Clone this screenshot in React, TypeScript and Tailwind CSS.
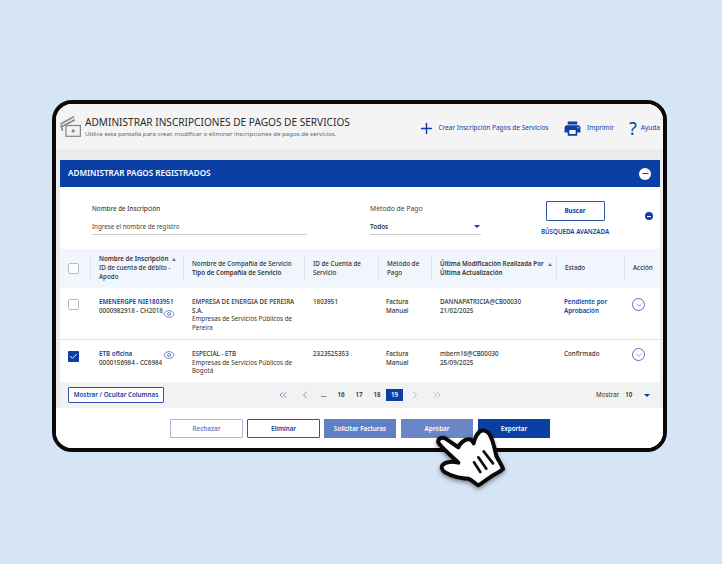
import { ChevronDown, ChevronLeft, ChevronRight, ChevronsLeft, ChevronsRight, Eye, Minus, Plus, Check } from "lucide-react";
import { MdPrint } from "react-icons/md";

const font = "[font-family:'Noto_Sans',sans-serif]";

function CashIcon() {
  return (
    <svg viewBox="0 0 21 21" className="h-[21px] w-[21px] shrink-0" fill="none" stroke="#8a8a8a" strokeWidth="1.3">
      <path d="M0.5 8 L14 0.8 M1 11 L15 3.8 M2.5 14.5 L1 9" strokeWidth="1.8" />
      <rect x="6" y="9.5" width="14.4" height="10.8" fill="#f4f4f4" />
      <circle cx="13.2" cy="14.9" r="1.7" fill="#8a8a8a" stroke="none" />
    </svg>
  );
}

function SortUp() {
  return <span className="ml-[4px] inline-block h-0 w-0 border-x-[2.5px] border-b-[3px] border-x-transparent border-b-[#777] align-middle" />;
}

function Caret() {
  return <span className="block h-0 w-0 border-x-[3.5px] border-t-[3.5px] border-x-transparent border-t-[#0b3fa4]" />;
}

function HeadCell({ children, divider = true }: { children: React.ReactNode; divider?: boolean }) {
  return (
    <div className="flex h-full items-center">
      {divider && <div className="h-[25px] w-px shrink-0 bg-[#dfe5ec]" />}
      <div className="whitespace-nowrap pl-[8px] text-[6.25px] font-medium leading-[8.7px] text-[#333]">{children}</div>
    </div>
  );
}

function CheckBox({ checked }: { checked?: boolean }) {
  if (checked) {
    return (
      <div className="flex h-[11px] w-[11px] items-center justify-center rounded-[1px] bg-[#0b3fa4]">
        <Check className="h-[9px] w-[9px] text-white" strokeWidth={2.5} />
      </div>
    );
  }
  return <div className="h-[11px] w-[11px] rounded-[2px] border border-[#bbb] bg-white" />;
}

function ActionCircle() {
  return (
    <div className="flex h-[13px] w-[13px] items-center justify-center rounded-full border border-[#5a6fb5]">
      <ChevronDown className="h-[10px] w-[10px] text-[#5a6fb5]" strokeWidth={1.5} />
    </div>
  );
}

function Row({ check, name, account, eyeUp, company, type, id, estado, pending, mod, date, h }: {
  check?: boolean; name: string; account: string; eyeUp?: boolean; company: React.ReactNode; type: React.ReactNode;
  id: string; estado: React.ReactNode; pending?: boolean; mod: string; date: string; h: string;
}) {
  return (
    <div className={`grid grid-cols-[30px_93px_121px_74px_53px_125px_68px_36px] pt-[10px] text-[6.25px] font-medium leading-[8.7px] text-[#333] ${h}`}>
      <div className="pl-[8px] pt-[1px]"><CheckBox checked={check} /></div>
      <div className="pl-[9px]">
        <div className="font-semibold text-[#0b3fa4]">{name}</div>
        <div className="relative whitespace-nowrap">
          {account}
          <Eye className={`absolute left-[64px] h-[12px] w-[12px] text-[#3c5cae] ${eyeUp ? "top-[-10px]" : "top-[1px]"}`} strokeWidth={1.4} />
        </div>
      </div>
      <div className="pl-[9px] pr-[6px]">
        <div>{company}</div>
        <div className="font-normal">{type}</div>
      </div>
      <div className="pl-[9px]">{id}</div>
      <div className="pl-[8px]">Factura<br />Manual</div>
      <div className="pl-[9px]"><div>{mod}</div><div>{date}</div></div>
      <div className={`pl-[8px] ${pending ? "font-semibold text-[#0b3fa4]" : ""}`}>{estado}</div>
      <div className={`pl-[8px] ${check ? "-mt-[2px]" : ""}`}><ActionCircle /></div>
    </div>
  );
}

function Hand() {
  return (
    <svg viewBox="0 0 270 225" className="absolute left-[425px] top-[420px] h-[75px] w-[90px] drop-shadow-[0_2px_2px_rgba(0,0,0,0.45)]">
      <path
        d="M40 68 C38 54 52 50 62 56 L100 82 C104 70 118 60 128 58 C136 56 142 60 146 70 C148 56 158 36 170 32 C182 28 194 40 198 52 C205 66 210 90 214 108 C222 124 232 138 234 147 C222 158 206 164 198 170 C186 176 172 190 160 196 C150 190 140 180 130 176 C112 176 80 170 62 158 C48 150 48 140 54 134 C62 124 84 124 100 128 C80 108 54 88 40 68 Z"
        fill="#fff"
        stroke="#0a0a0a"
        strokeWidth="12"
        strokeLinejoin="round"
      />
      <path d="M147 127 L166 156 M160 112 L184 146 M176 94 L204 130" stroke="#0a0a0a" strokeWidth="8" strokeLinecap="round" fill="none" />
    </svg>
  );
}

export default function App() {
  return (
    <div className={`relative h-[564px] w-[722px] overflow-hidden bg-[#d5e5f6] pl-[52px] pt-[100px] ${font}`}>
      <div className="flex h-[352px] w-[615px] flex-col overflow-hidden rounded-[20px] border-[4px] border-[#0a0a0a] bg-white">
        {/* page header */}
        <div className="flex h-[45px] shrink-0 items-center bg-[#f4f4f4] pl-[4px] pr-[3px]">
          <CashIcon />
          <div className="ml-[4px] mt-[1px]">
            <div className="whitespace-nowrap text-[10.1px] leading-[13px] text-[#2b2b2b]">ADMINISTRAR INSCRIPCIONES DE PAGOS DE SERVICIOS</div>
            <div className="whitespace-nowrap text-[6.13px] leading-[9px] text-[#666]">Utilice esta pantalla para crear, modificar o eliminar inscripciones de pagos de servicios.</div>
          </div>
          <div className="ml-auto mt-[3px] flex items-center text-[6.5px] text-[#0b3fa4]">
            <Plus className="h-[17px] w-[17px]" strokeWidth={2} />
            <span className="ml-[3px] whitespace-nowrap">Crear Inscripción Pagos de Servicios</span>
            <MdPrint className="ml-[15px] h-[19px] w-[19px]" />
            <span className="ml-[4.5px]">Imprimir</span>
            <span className="ml-[15px] text-[18px] leading-none">?</span>
            <span className="ml-[4px]">Ayuda</span>
          </div>
        </div>

        <div className="flex-1 bg-[#ececec] pl-[4px] pr-[3px] pt-[11px]">
          <div className="h-[248px] bg-white">
            {/* blue bar */}
            <div className="flex h-[27px] items-center justify-between bg-[#0b3fa4] pl-[8px] pr-[9px]">
              <span className="text-[8.15px] font-semibold text-white">ADMINISTRAR PAGOS REGISTRADOS</span>
              <div className="flex h-[12px] w-[12px] items-center justify-center rounded-full bg-white">
                <Minus className="h-[9px] w-[9px] text-[#0b3fa4]" strokeWidth={3} />
              </div>
            </div>

            {/* filters */}
            <div className="relative flex h-[62px] bg-white pt-[17px]">
              <div className="ml-[32px] w-[215px] text-[6.25px] text-[#444]">
                <div className="font-medium leading-[9px]">Nombre de Inscripción</div>
                <div className="mt-[9px] border-b border-[#ccc] pb-[3px] leading-[9px]">Ingrese el nombre de registro</div>
              </div>
              <div className="ml-[63px] w-[111px] text-[6.8px] text-[#444]">
                <div className="leading-[9px]">Método de Pago</div>
                <div className="mt-[9px] flex items-center justify-between border-b border-[#ccc] pb-[3px] pr-[1px] text-[6.4px] font-semibold leading-[9px] text-[#333]">
                  Todos <Caret />
                </div>
              </div>
              <div className="ml-[59px] -mt-[3px] flex w-[70px] flex-col items-center">
                <div className="flex h-[20px] w-[59px] items-center justify-center rounded-[1px] border border-[#2e55ab] text-[6.25px] font-bold text-[#0b3fa4]">Buscar</div>
                <div className="mt-[6px] whitespace-nowrap text-[6.2px] font-semibold text-[#0b3fa4]">BÚSQUEDA AVANZADA</div>
              </div>
              <div className="ml-[35px] mt-[8px] flex h-[8px] w-[8px] items-center justify-center rounded-full bg-[#0b3fa4]">
                <div className="h-px w-[4px] bg-white" />
              </div>
            </div>

            {/* table */}
            <div className="grid h-[39px] grid-cols-[30px_93px_121px_74px_53px_125px_68px_36px] items-center bg-[#f0f6fc]">
              <div className="pl-[8px]"><CheckBox /></div>
              <HeadCell><span className="font-semibold">Nombre de Inscripción<SortUp /></span><br />ID de cuenta de débito -<br />Apodo</HeadCell>
              <HeadCell>Nombre de Compañía de Servicio<br /><span className="font-semibold">Tipo de Compañía de Servicio</span></HeadCell>
              <HeadCell>ID de Cuenta de<br />Servicio</HeadCell>
              <HeadCell>Método de<br />Pago</HeadCell>
              <HeadCell><span className="font-semibold">Última Modificación Realizada Por<SortUp /></span><br /><span className="font-semibold">Última Actualización</span></HeadCell>
              <HeadCell>Estado</HeadCell>
              <HeadCell>Acción</HeadCell>
            </div>
            <Row
              h="h-[52px] border-b border-[#e3e3e3]"
              name="EMENERGPE NIE1803951"
              account="0000982918 - CH2018"
              company={<>EMPRESA DE ENERGIA DE PEREIRA<br />S.A.</>}
              type={<>Empresas de Servicios Públicos de<br />Pereira</>}
              id="1803951"
              mod="DANNAPATRICIA@CB00030"
              date="21/02/2025"
              pending
              estado={<>Pendiente por<br />Aprobación</>}
            />
            <Row
              h="h-[42px]"
              check
              eyeUp
              name="ETB oficina"
              account="0000156984 - CC6984"
              company="ESPECIAL - ETB"
              type={<>Empresas de Servicios Públicos de<br />Bogotá</>}
              id="2323525353"
              mod="mbern16@CB00030"
              date="25/09/2025"
              estado="Confirmado"
            />

            {/* pagination */}
            <div className="flex h-[26px] items-center bg-[#f2f2f2] pl-[8px] text-[6.25px] font-semibold text-[#333]">
              <div className="flex h-[16px] w-[96px] items-center justify-center whitespace-nowrap rounded-[1px] border border-[#2e55ab] bg-white text-[#0b3fa4]">Mostrar / Ocultar Columnas</div>
              <ChevronsLeft className="ml-[113px] h-[12px] w-[12px] shrink-0 text-[#3c5cae]" strokeWidth={1.3} />
              <ChevronLeft className="ml-[10px] h-[12px] w-[12px] shrink-0 text-[#3c5cae]" strokeWidth={1.3} />
              <span className="ml-[10px] w-[11px]">...</span>
              <span className="w-[18px] text-center">16</span>
              <span className="w-[18px] text-center">17</span>
              <span className="w-[18px] text-center">18</span>
              <span className="flex h-[12px] w-[17px] shrink-0 items-center justify-center bg-[#0b3fa4] text-white">19</span>
              <ChevronRight className="ml-[6px] h-[12px] w-[12px] shrink-0 text-[#8a9ccc]" strokeWidth={1.3} />
              <ChevronsRight className="ml-[10px] h-[12px] w-[12px] shrink-0 text-[#8a9ccc]" strokeWidth={1.3} />
              <span className="ml-[153px] font-normal">Mostrar</span>
              <span className="ml-[6px]">10</span>
              <span className="ml-[12px]"><Caret /></span>
            </div>
          </div>
        </div>

        {/* actions */}
        <div className="flex h-[40px] shrink-0 items-start bg-white pl-[114px] pt-[11px] text-[6.25px] font-semibold">
          <div className="flex h-[19px] w-[73px] items-center justify-center rounded-[1px] border border-[#a9b9de] text-[#6a80b8]">Rechazar</div>
          <div className="ml-[4px] flex h-[19px] w-[73px] items-center justify-center rounded-[1px] border border-[#2e55ab] text-[#0b3fa4]">Eliminar</div>
          <div className="ml-[4px] flex h-[19px] w-[72px] items-center justify-center bg-[#5f80c4] text-white">Solicitar Facturas</div>
          <div className="ml-[5px] flex h-[19px] w-[72px] items-center justify-center bg-[#6a86c6] text-white">Aprobar</div>
          <div className="ml-[5px] flex h-[19px] w-[72px] items-center justify-center bg-[#0b3fa4] text-white">Exportar</div>
        </div>
      </div>
      <Hand />
    </div>
  );
}
